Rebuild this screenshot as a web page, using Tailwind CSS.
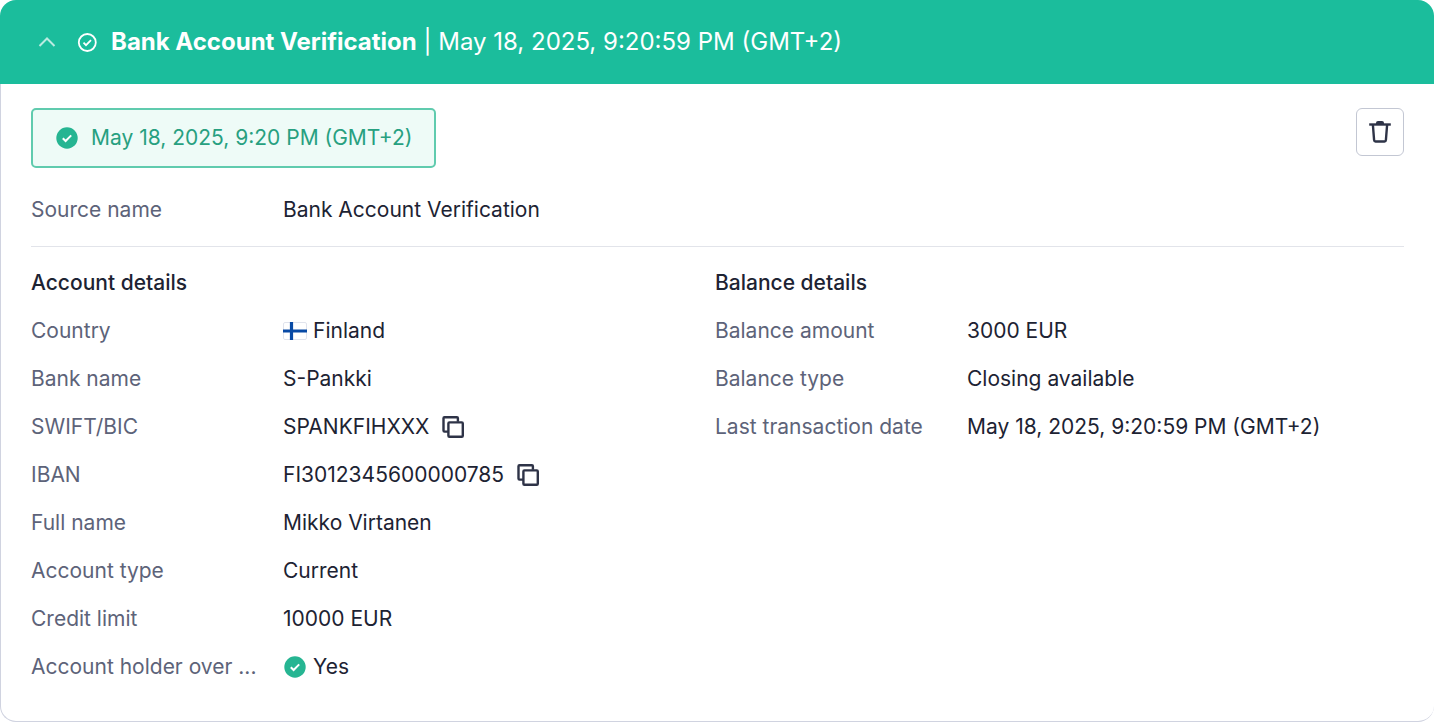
<!DOCTYPE html>
<html lang="en">

<head>
    <meta charset="UTF-8">
    <meta name="viewport" content="width=device-width, initial-scale=1.0">
    <title>Bank Account Verification</title>
    <script src="https://cdn.jsdelivr.net/npm/@tailwindcss/browser@4"></script>
</head>

<body class="bg-white font-['Inter',sans-serif] text-[21px] leading-8 text-[#1d2333]">
    <section class="flex min-h-screen flex-col">
        <!-- Header -->
        <header class="flex h-[84px] items-center rounded-t-2xl bg-[#1bbd9c] px-9 text-2xl text-white">
            <button type="button" aria-label="Collapse" class="mr-4 opacity-70">
                <svg class="size-6" viewBox="0 0 24 24" fill="none" stroke="currentColor" stroke-width="2">
                    <path d="M3.5 16 11 8.500 18.500 16" />
                </svg>
            </button>
            <svg class="mr-3 size-[23px]" viewBox="0 0 23 23" fill="none" stroke="currentColor" stroke-width="1.8">
                <circle cx="11.300" cy="11.500" r="8.500" />
                <path d="m7.500 11.700 2.500 2.500 5-5" />
            </svg>
            <h1><span class="font-bold">Bank Account Verification</span> | May 18, 2025, 9:20:59 PM (GMT+2)</h1>
        </header>

        <div class="grow rounded-b-2xl border-b border-l border-[#d0d3e0] px-[30px] pt-6 pb-[30px]">
            <!-- Status and delete -->
            <div class="flex items-start justify-between">
                <div class="flex h-[60px] items-center gap-3 rounded-[5px] border-2 border-[#60cbae] bg-[#eefbf7] px-[22px] text-[#27a080]">
                    <svg class="size-6" viewBox="0 0 24 24" fill="none">
                        <circle cx="12" cy="12" r="10.700" fill="#26b592" />
                        <path d="m7.800 12.200 2.800 2.800 5.600-5.600" stroke="#fff" stroke-width="2" />
                    </svg>
                    <span>May 18, 2025, 9:20 PM (GMT+2)</span>
                </div>
                <button type="button" aria-label="Delete" class="flex size-12 items-center justify-center rounded-md border border-[#c3c7d3] text-[#2e3347]">
                    <svg class="size-6" viewBox="0 0 24 24" fill="none" stroke="currentColor" stroke-width="2.4">
                        <path d="M1.200 4.500h21.600" />
                        <path d="M8 4V3Q8 1 10 1h4q2 0 2 2v1z" fill="currentColor" stroke="none" />
                        <path d="m4.900 5 1.200 15Q6.200 21.500 7.500 21.500h9q1.300 0 1.400-1.500l1.200-15" />
                    </svg>
                </button>
            </div>

            <dl class="mt-[18px] flex h-12 items-center">
                <dt class="w-[252px] text-[#5d6379]">Source name</dt>
                <dd>Bank Account Verification</dd>
            </dl>
            <hr class="mt-3 mb-3 border-[#e2e4ea]">

            <div class="grid grid-cols-[684fr_689fr]">
                <!-- Account -->
                <div>
                    <h2 class="flex h-12 items-center font-medium">Account details</h2>
                    <dl class="grid auto-rows-[48px] grid-cols-[252px_1fr] items-center">
                        <dt class="text-[#5d6379]">Country</dt>
                        <dd class="flex items-center gap-1.5">
                            <svg class="size-6" viewBox="0 0 24 24" fill="none">
                                <rect x=".5" y="3.500" width="23" height="17" rx="1.500" fill="#fff" stroke="#e1e4ed" />
                                <path d="M0 12h24M8.500 3v18" stroke="#084aa5" stroke-width="3.200" />
                            </svg>
                            Finland
                        </dd>
                        <dt class="text-[#5d6379]">Bank name</dt>
                        <dd>S-Pankki</dd>
                        <dt class="text-[#5d6379]">SWIFT/BIC</dt>
                        <dd class="flex items-center gap-3">
                            SPANKFIHXXX
                            <button type="button" aria-label="Copy SWIFT/BIC" class="text-[#2e3347]">
                                <svg class="size-6" viewBox="0 0 24 24" fill="none" stroke="currentColor" stroke-width="2.4">
                                    <path d="M7 16.600H3.500q-1 0-1-1V3.200q0-1 1-1h12.400q1 0 1 1v3.500" />
                                    <rect x="7.400" y="7.400" width="14.400" height="14.400" rx="1" />
                                </svg>
                            </button>
                        </dd>
                        <dt class="text-[#5d6379]">IBAN</dt>
                        <dd class="flex items-center gap-3">
                            FI3012345600000785
                            <button type="button" aria-label="Copy IBAN" class="text-[#2e3347]">
                                <svg class="size-6" viewBox="0 0 24 24" fill="none" stroke="currentColor" stroke-width="2.4">
                                    <path d="M7 16.600H3.500q-1 0-1-1V3.200q0-1 1-1h12.400q1 0 1 1v3.500" />
                                    <rect x="7.400" y="7.400" width="14.400" height="14.400" rx="1" />
                                </svg>
                            </button>
                        </dd>
                        <dt class="text-[#5d6379]">Full name</dt>
                        <dd>Mikko Virtanen</dd>
                        <dt class="text-[#5d6379]">Account type</dt>
                        <dd>Current</dd>
                        <dt class="text-[#5d6379]">Credit limit</dt>
                        <dd>10000 EUR</dd>
                        <dt class="whitespace-nowrap text-[#5d6379]">Account holder over ...</dt>
                        <dd class="flex items-center gap-1.5">
                            <svg class="size-6" viewBox="0 0 24 24" fill="none">
                                <circle cx="12" cy="12" r="10.700" fill="#26b592" />
                                <path d="m7.800 12.200 2.800 2.800 5.600-5.600" stroke="#fff" stroke-width="2" />
                            </svg>
                            Yes
                        </dd>
                    </dl>
                </div>

                <!-- Balance -->
                <div>
                    <h2 class="flex h-12 items-center font-medium">Balance details</h2>
                    <dl class="grid auto-rows-[48px] grid-cols-[252px_1fr] items-center">
                        <dt class="text-[#5d6379]">Balance amount</dt>
                        <dd>3000 EUR</dd>
                        <dt class="text-[#5d6379]">Balance type</dt>
                        <dd>Closing available</dd>
                        <dt class="text-[#5d6379]">Last transaction date</dt>
                        <dd>May 18, 2025, 9:20:59 PM (GMT+2)</dd>
                    </dl>
                </div>
            </div>
        </div>
    </section>
</body>

</html>
